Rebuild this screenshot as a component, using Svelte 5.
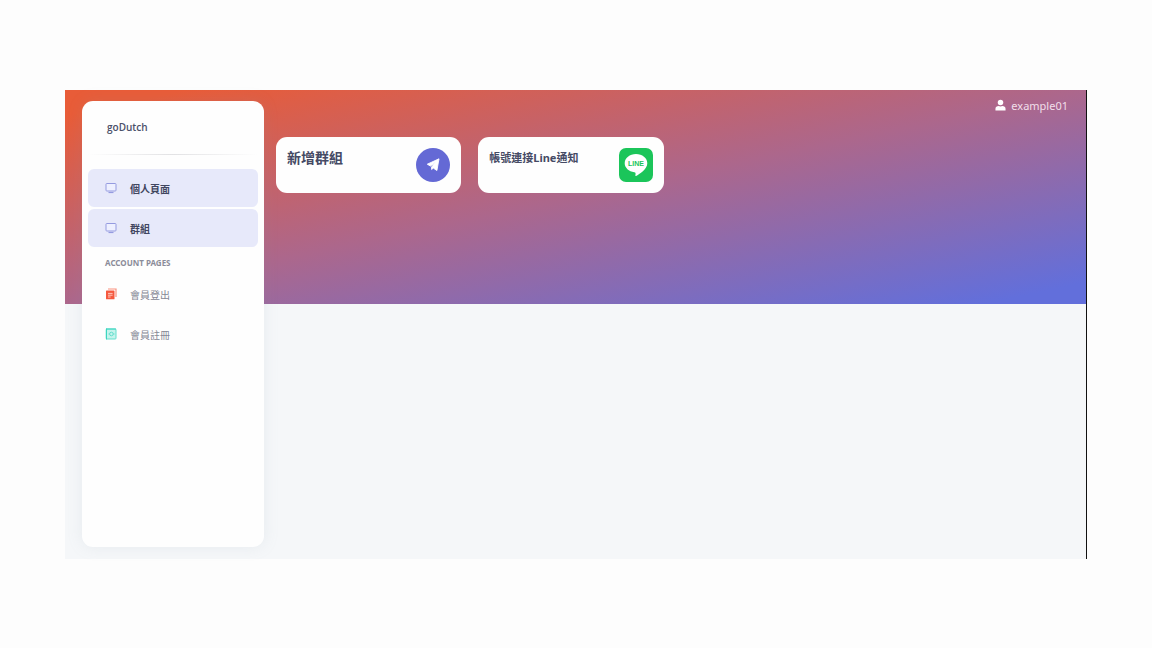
<script lang="ts">
  const pages = ['個人頁面', '群組'];
</script>

<div class="frame">
  <aside class="sidebar">
    <a class="brand" href="#home">goDutch</a>
    <hr />
    <nav>
      {#each pages as page}
        <a class="item active" href="#{page}">
          <svg viewBox="0 0 12 12" aria-hidden="true">
            <rect x="1" y="1.5" width="10" height="7.500" rx=".8" fill="#eef0ff" stroke="#959be0" />
            <path d="M3.500 10.500h5" stroke="#959be0" stroke-width="1.200" fill="none" />
          </svg>
          <span>{page}</span>
        </a>
      {/each}
      <h6>ACCOUNT PAGES</h6>
      <a class="item" href="#logout">
        <svg viewBox="0 0 12 12" aria-hidden="true">
          <path d="M3 1h8v8" fill="none" stroke="#f9917e" stroke-width="1.2" />
          <rect x="1" y="2.5" width="8.5" height="8.8" rx=".6" fill="#f5593f" />
          <path d="M3 5.4h4.6M3 7.2h4.6M3 9h2.6" stroke="#ffd3ca" stroke-width=".9" />
        </svg>
        <span>會員登出</span>
      </a>
      <a class="item" href="#register">
        <svg viewBox="0 0 12 12" aria-hidden="true">
          <rect x="1.2" y="1" width="9.8" height="10" rx=".8" fill="#c5f4ec" stroke="#62dfcd" />
          <path d="M1.5 .5v11M1 1h10" stroke="#3bd5bf" />
          <circle cx="6.4" cy="6" r="1.8" fill="none" stroke="#62dfcd" />
          <path d="M3.5 6h1M8.2 6h1.3" stroke="#62dfcd" />
        </svg>
        <span>會員註冊</span>
      </a>
    </nav>
  </aside>

  <main>
    <header>
      <a class="user" href="#profile">
        <svg viewBox="0 0 12 12" aria-hidden="true">
          <circle cx="6" cy="3.2" r="3" fill="#fff" />
          <path d="M.5 12V10.200C.5 8 2 7 4 7c1.200.7 2.800.7 4 0 2 0 3.500 1 3.500 3.200V12z" fill="#fff" />
        </svg>
        <span>example01</span>
      </a>
    </header>
    <section class="cards">
      <a class="card" href="#new-group">
        <span class="title large">新增群組</span>
        <svg viewBox="0 0 34 34" aria-hidden="true">
          <circle cx="17" cy="17" r="17" fill="#6469d5" />
          <path d="M23 10.800 11.300 16.200l3.200 1.900 5-4-3.900 4.900v2.500l1.700-1.400 3.600 2.400z" fill="#fff" stroke="#fff" stroke-width=".9" stroke-linejoin="round" />
        </svg>
      </a>
      <a class="card" href="#line">
        <span class="title">帳號連接Line通知</span>
        <svg viewBox="0 0 34 34" role="img" aria-label="LINE">
          <rect width="34" height="34" rx="7" fill="#1bc55a" />
          <path d="M17 6C10.700 6 5.700 10 5.700 15.200c0 4.500 4.100 8.200 9.600 9 1.600.3 1.400 1 1.100 3.300-.1.500.2.700.7.400 3.200-1.800 11.200-6.500 11.200-12.700C28.300 10 23.300 6 17 6z" fill="#fff" />
          <text x="17" y="18" text-anchor="middle">LINE</text>
        </svg>
      </a>
    </section>
  </main>
</div>

<style>
  :global(body) {
    margin: 0;
    background: #fdfdfd;
    font-family: "Open Sans", "Noto Sans CJK TC", sans-serif;
  }
  :global(*) {
    box-sizing: border-box;
  }
  a {
    color: inherit;
    text-decoration: none;
  }
  .frame {
    display: flex;
    gap: 12px;
    min-height: calc(100vh - 179px);
    margin: 90px 65px 89px;
    padding: 11px 18px 12px 17px;
    border-right: 1px solid #111;
    background:
      linear-gradient(to bottom right, #e85c38 6%, #ac678c 50%, #626fdb 95%) top / 100% 214px no-repeat,
      #f5f7f9;
  }
  .sidebar {
    flex: 0 0 182px;
    padding: 16px 6px;
    border-radius: 11px;
    background: #fefefe;
    box-shadow: 0 0 16px rgba(136, 152, 170, 0.13);
  }
  .brand {
    display: block;
    padding-left: 19px;
    font-size: 10px;
    font-weight: 600;
    line-height: 20px;
    color: #4b5069;
  }
  hr {
    height: 1px;
    margin: 17px 0 14px;
    border: 0;
    background: linear-gradient(90deg, transparent, #e2e2e4, transparent);
  }
  .item {
    display: flex;
    align-items: center;
    gap: 13px;
    height: 38px;
    margin-bottom: 2px;
    padding-left: 17px;
    border-radius: 6px;
    font-size: 10px;
    color: #858794;
  }
  .item svg {
    width: 12px;
    height: 12px;
  }
  .item.active {
    background: #e7e9fa;
    font-weight: 600;
    color: #41465f;
  }
  h6 {
    margin: 5px 0 1px 17px;
    font-family: "Noto Sans", sans-serif;
    font-size: 8px;
    font-weight: 700;
    line-height: 22px;
    color: #8b8c99;
  }
  main {
    flex: 1;
    min-width: 0;
  }
  header {
    display: flex;
    justify-content: flex-end;
    height: 36px;
  }
  .user {
    display: flex;
    align-items: center;
    gap: 5px;
    height: 8px;
    font-family: "Noto Sans", sans-serif;
    font-size: 11px;
    color: #f1dfe9;
  }
  .user svg {
    width: 11px;
    height: 12px;
  }
  .cards {
    display: grid;
    grid-template-columns: repeat(4, 1fr);
    gap: 17px;
  }
  .card {
    display: flex;
    justify-content: space-between;
    padding: 11px;
    border-radius: 11px;
    background: #fefefe;
  }
  .card svg {
    flex: none;
    width: 34px;
    height: 34px;
  }
  .title {
    font-family: "Noto Sans", "Noto Sans CJK TC", sans-serif;
    font-size: 11px;
    font-weight: 700;
    line-height: 20px;
    white-space: nowrap;
    color: #454a64;
  }
  .title.large {
    font-size: 14px;
    font-weight: 600;
  }
  text {
    font-family: "Liberation Sans", sans-serif;
    font-size: 7px;
    font-weight: 700;
    fill: #1bc55a;
  }
</style>
